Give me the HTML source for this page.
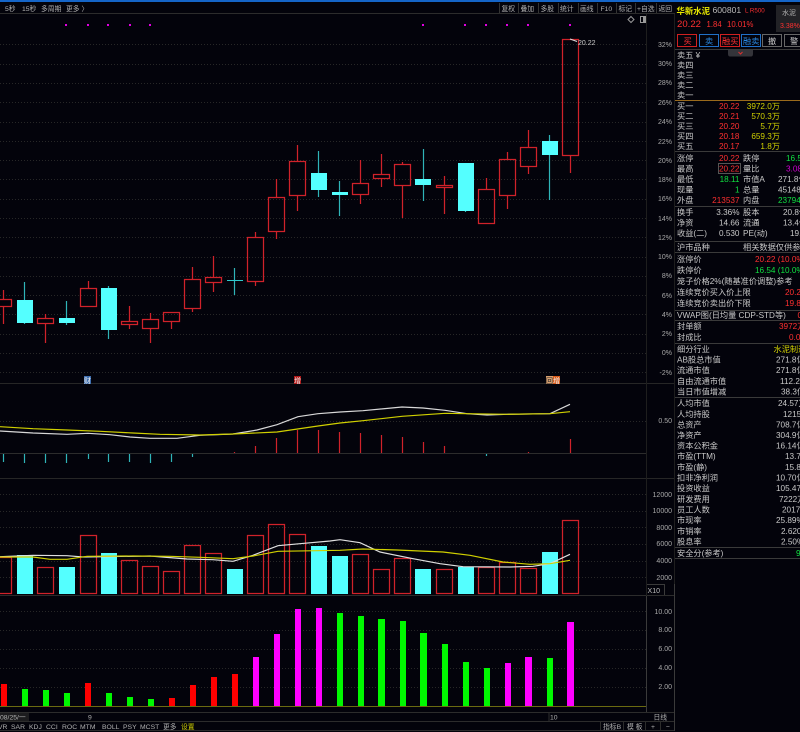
<!DOCTYPE html>
<html><head><meta charset="utf-8"><style>
html,body{margin:0;padding:0;background:#03030b;overflow:hidden}
svg{display:block;position:absolute;left:0;top:0}
text{font-family:"Liberation Sans","Noto Sans CJK SC",sans-serif;font-size:8.2px;fill:#c8c8c8}
.t text{font-size:6.8px;fill:#b0b0b0}
.a text{font-size:7px;fill:#a8a8a8;text-anchor:end}
.r{fill:#ff3030!important}
.y{fill:#d0d000!important}
.g{fill:#10e040!important}
.m{fill:#d000d0!important}
.e{text-anchor:end}
</style></head><body>
<svg width="800" height="732" viewBox="0 0 800 732" xmlns="http://www.w3.org/2000/svg">
<rect width="800" height="732" fill="#03030b"/>
<rect width="800" height="2" fill="#1565c8"/>
<path d="M0 13.5H675" stroke="#2c2c2c"/>
<!-- grids -->
<path stroke="#272727" stroke-dasharray="1 2" d="M0 44.500H646M0 64.500H646M0 83.500H646M0 102.500H646M0 122.500H646M0 141.500H646M0 160.500H646M0 179.500H646M0 199.500H646M0 218.500H646M0 237.500H646M0 257.500H646M0 276.500H646M0 295.500H646M0 314.500H646M0 334.500H646M0 353.500H646M0 372.500H646M0 421.500H646M0 494.500H646M0 511.500H646M0 527.500H646M0 544.500H646M0 561.500H646M0 577.500H646M0 611.500H646M0 630.500H646M0 649.500H646M0 668.500H646M0 687.500H646"/>
<!-- panel dividers -->
<path stroke="#262626" d="M0 383.500H675M0 478.500H675"/>
<path stroke="#2c2c2c" d="M0 595.500H675M0 712.500H675M0 721.500H675M0 730.500H675"/>
<path stroke="#1e1e1e" d="M646.500 14V596"/>
<path stroke="#3a3a3a" d="M646.500 596V712M674.500 584V731"/>
<path stroke="#1e1e1e" d="M674.500 14V584"/>
<path stroke="#6a6a10" d="M0 706.500H646"/>
<path stroke="#2c2c2c" d="M0 453.500H646"/>
<!-- top dots -->
<g fill="#e000e0"><rect x="65" y="24" width="2" height="2"/><rect x="87" y="24" width="2" height="2"/><rect x="107" y="24" width="2" height="2"/><rect x="129" y="24" width="2" height="2"/><rect x="149" y="24" width="2" height="2"/><rect x="422" y="24" width="2" height="2"/><rect x="464" y="24" width="2" height="2"/><rect x="485" y="24" width="2" height="2"/><rect x="506" y="24" width="2" height="2"/><rect x="527" y="24" width="2" height="2"/><rect x="569" y="24" width="2" height="2"/></g>
<!-- red candles -->
<path fill="none" stroke="#d0222a" stroke-width="1.25" d="M-4.500 299.500h16v7h-16zM3.500 290V299M3.500 307V324
M37.500 318.500h16v5h-16zM45.500 314V318M45.500 324V343
M80.500 288.500h16v18h-16zM88.500 281V288
M121.500 321.500h16v3h-16zM129.500 306V321M129.500 325V329
M142.500 319.500h16v9h-16zM150.500 313V319M150.500 329V343
M163.500 312.500h16v9h-16zM171.500 322V329
M184.500 279.500h16v29h-16zM192.500 267V279M192.500 309V312
M205.500 277.500h16v5h-16zM213.500 256V277M213.500 283V292
M247.500 237.500h16v44h-16zM255.500 232V237M255.500 282V286
M268.500 197.500h16v34h-16zM276.500 179V197M276.500 232V239
M289.500 161.500h16v34h-16zM297.500 145V161M297.500 196V211
M352.500 183.500h16v11h-16zM360.500 160V183M360.500 195V204
M373.500 174.500h16v4h-16zM381.500 154V174M381.500 179V187
M394.500 164.500h16v21h-16zM402.500 162V164M402.500 186V218
M436.500 185.500h16v2h-16zM444.500 176V185M444.500 188V214
M478.500 189.500h16v34h-16zM486.500 178V189
M499.500 159.500h16v36h-16zM507.500 152V159M507.500 196V209
M520.500 147.500h16v19h-16zM528.500 130V147M528.500 167V174
M562.500 39.500h16v116h-16zM570.500 156V173"/>
<!-- cyan candles -->
<path fill="none" stroke="#2fb4b8" stroke-width="1.2" d="M24.500 282V324M66.500 301V325M108.500 286V339M318.500 151V197M339.500 181V216M423.500 149V201M465.500 211V212M549.500 135V200M234.500 268V295"/>
<path stroke="#2fc8cc" d="M227 280.500H243"/>
<g fill="#54ffff"><rect x="17" y="300" width="16" height="23"/><rect x="59" y="318" width="16" height="5"/><rect x="101" y="288" width="16" height="42"/><rect x="311" y="173" width="16" height="17"/><rect x="332" y="192" width="16" height="3"/><rect x="415" y="179" width="16" height="6"/><rect x="458" y="163" width="16" height="48"/><rect x="542" y="141" width="16" height="14"/></g>
<path stroke="#ddd" fill="none" d="M570 39L577 41.500"/>
<text x="578" y="45" style="font-size:7px">20.22</text>
<!-- icons -->
<path fill="none" stroke="#999" d="M631 16.500l3 3-3 3-3-3z"/>
<path fill="none" stroke="#999" d="M640.500 16.500h5v6h-5z"/><rect x="643" y="17" width="2" height="5" fill="#999"/>
<!-- event markers -->
<rect x="84" y="376" width="7" height="8" fill="#3f6fb0"/><text x="84" y="383" style="font-size:7px;fill:#eee">财</text>
<rect x="294" y="376" width="7" height="8" fill="#b01818"/><text x="294" y="383" style="font-size:7px;fill:#eee">增</text>
<rect x="546" y="376" width="7" height="8" fill="#d8a070"/><text x="546" y="383" style="font-size:7px;fill:#222">回</text>
<rect x="553" y="376" width="7" height="8" fill="#d85a18"/><text x="553" y="383" style="font-size:7px;fill:#eee">增</text>
<!-- MACD -->
<path stroke="#2fb4b8" stroke-width="1.2" d="M3.500 454V462M24.500 454V463M45.500 454V463M66.500 454V463M88.500 454V459M108.500 454V462M129.500 454V462M150.500 454V463M171.500 454V462M192.500 454V457M486.500 454V456"/>
<path stroke="#d0222a" stroke-width="1.2" d="M234.500 452V453M255.500 446V453M276.500 438V453M297.500 430V453M318.500 430V453M339.500 432V453M360.500 433V453M381.500 435V453M402.500 437V453M423.500 442V453M444.500 446V453M528.500 452V453M570.500 439V453"/>
<polyline fill="none" stroke="#d8d8d8" stroke-width="1.2" points="0,431 33,433 67,434.3 88,433.3 110,434.7 130,437 150,438.3 177,438.3 200,435.3 233,434 257,430 277,424.7 298,416.7 318,413.7 340,412 363,410.7 402,407 423,408 445,410.3 467,413.7 487,415 507,414.3 550,413.7 570,404.3"/>
<polyline fill="none" stroke="#d0d000" stroke-width="1.2" points="0,426.7 33,428.7 67,430 100,431.3 133,433 160,434.3 200,435 233,434 277,432 318,426 340,423 363,420.7 402,416.3 445,413.3 467,413.7 507,414.3 550,413.7 570,411.7"/>
<!-- volume -->
<path fill="none" stroke="#d0222a" stroke-width="1.25" d="M-4.500 593.500V557.500h16V593.500zM37.500 593.500V567.500h16V593.500zM80.500 593.500V535.500h16V593.500zM121.500 593.500V560.500h16V593.500zM142.500 593.500V566.500h16V593.500zM163.500 593.500V571.500h16V593.500zM184.500 593.500V545.500h16V593.500zM205.500 593.500V553.500h16V593.500zM247.500 593.500V535.500h16V593.500zM268.500 593.500V524.500h16V593.500zM289.500 593.500V534.500h16V593.500zM352.500 593.500V554.500h16V593.500zM373.500 593.500V569.500h16V593.500zM394.500 593.500V558.500h16V593.500zM436.500 593.500V569.500h16V593.500zM478.500 593.500V567.500h16V593.500zM499.500 593.500V562.500h16V593.500zM520.500 593.500V568.500h16V593.500zM562.500 593.500V520.500h16V593.500z"/>
<g fill="#54ffff"><rect x="17" y="555" width="16" height="39"/><rect x="59" y="567" width="16" height="27"/><rect x="101" y="553" width="16" height="41"/><rect x="227" y="569" width="16" height="25"/><rect x="311" y="546" width="16" height="48"/><rect x="332" y="556" width="16" height="38"/><rect x="415" y="569" width="16" height="25"/><rect x="458" y="567" width="16" height="27"/><rect x="542" y="552" width="16" height="42"/></g>
<polyline fill="none" stroke="#e0e0e0" stroke-width="1.2" points="0,556.7 33,555.3 67,555.7 83,557 150,556 187,559 213,559.7 233,561.3 253,555.3 278,545.7 300,543.7 330,541 340,539.7 360,542.7 380,552 413,558.7 440,563.7 463,566.7 510,567 533,566.3 550,563.7 570,554.3"/>
<polyline fill="none" stroke="#d0d000" stroke-width="1.2" points="0,557 33,557 50,559.3 67,559.3 87,556.3 133,556 170,556.3 200,557.3 233,558.7 253,556 278,551.3 340,550.3 363,549 397,550 443,552 470,555.3 503,562 530,564.3 550,563.7 570,560.3"/>
<!-- indicator bars -->
<g fill="#ff0000"><rect x="1" y="684" width="6" height="22"/><rect x="85" y="683" width="6" height="23"/><rect x="169" y="698" width="6" height="8"/><rect x="190" y="685" width="6" height="21"/><rect x="211" y="677" width="6" height="29"/><rect x="232" y="674" width="6" height="32"/></g>
<g fill="#00f800"><rect x="22" y="689" width="6" height="17"/><rect x="43" y="690" width="6" height="16"/><rect x="64" y="693" width="6" height="13"/><rect x="106" y="693" width="6" height="13"/><rect x="127" y="697" width="6" height="9"/><rect x="148" y="699" width="6" height="7"/><rect x="337" y="613" width="6" height="93"/><rect x="358" y="616" width="6" height="90"/><rect x="378" y="619" width="7" height="87"/><rect x="400" y="621" width="6" height="85"/><rect x="420" y="633" width="7" height="73"/><rect x="442" y="644" width="6" height="62"/><rect x="463" y="662" width="6" height="44"/><rect x="484" y="668" width="6" height="38"/><rect x="547" y="658" width="6" height="48"/></g>
<g fill="#ff00ff"><rect x="253" y="657" width="6" height="49"/><rect x="274" y="634" width="6" height="72"/><rect x="295" y="609" width="6" height="97"/><rect x="316" y="608" width="6" height="98"/><rect x="505" y="663" width="6" height="43"/><rect x="525" y="657" width="7" height="49"/><rect x="567" y="622" width="7" height="84"/></g>
<!-- axis labels -->
<g class="a">
<text x="672" y="47">32%</text><text x="672" y="66">30%</text><text x="672" y="85">28%</text><text x="672" y="105">26%</text><text x="672" y="124">24%</text><text x="672" y="144">22%</text><text x="672" y="163">20%</text><text x="672" y="182">18%</text><text x="672" y="201">16%</text><text x="672" y="221">14%</text><text x="672" y="240">12%</text><text x="672" y="259">10%</text><text x="672" y="278">8%</text><text x="672" y="298">6%</text><text x="672" y="317">4%</text><text x="672" y="336">2%</text><text x="672" y="355">0%</text><text x="672" y="375">-2%</text>
<text x="672" y="423">0.50</text>
<text x="672" y="497">12000</text><text x="672" y="513">10000</text><text x="672" y="530">8000</text><text x="672" y="546">6000</text><text x="672" y="563">4000</text><text x="672" y="580">2000</text>
<text x="672" y="614">10.00</text><text x="672" y="632">8.00</text><text x="672" y="651">6.00</text><text x="672" y="670">4.00</text><text x="672" y="689">2.00</text>
<text x="660" y="593" style="fill:#bbb">X10</text>
</g>
<path stroke="#3a3a3a" fill="none" d="M647 584.500H664.500V595"/>
<!-- toolbar -->
<g class="t">
<text x="5" y="11">5秒</text><text x="22" y="11">15秒</text><text x="41" y="11">多周期</text><text x="66" y="11">更多 〉</text>
<text x="501.500" y="11">复权</text><text x="520.500" y="11">叠加</text><text x="540.500" y="11">多股</text><text x="560" y="11">统计</text><text x="580" y="11">画线</text><text x="600.500" y="11">F10</text><text x="618.500" y="11">标记</text><text x="637" y="11">+自选</text><text x="658.500" y="11">返回</text>
</g>
<path stroke="#333" d="M499.500 3V13M518.500 3V13M538.500 3V13M558.500 3V13M578.500 3V13M597.500 3V13M616.500 3V13M635.500 3V13M656.500 3V13"/>
<!-- date & tabs -->
<rect x="0" y="713" width="29" height="8" fill="#1c1c1e"/>
<g class="t">
<text x="0" y="719.500">08/25/一</text><text x="88" y="719.500">9</text><text x="550" y="719.500">10</text><text x="653.500" y="719.500">日线</text>
<text x="-2" y="729">VR</text><text x="11" y="729">SAR</text><text x="29" y="729">KDJ</text><text x="46" y="729">CCI</text><text x="62" y="729">ROC</text><text x="80" y="729">MTM</text><text x="102" y="729">BOLL</text><text x="123" y="729">PSY</text><text x="140" y="729">MCST</text><text x="163" y="729">更多</text><text x="181" y="729" class="y">设置</text>
<text x="603" y="729">指标B</text><text x="627" y="729">模 板</text><text x="651" y="729">+</text><text x="666" y="729">−</text>
</g>
<path stroke="#2c2c2c" d="M549 713V721M600.500 722V730M623.500 722V730M645.500 722V730M660.500 722V730"/>
<!-- sidebar header -->
<text x="676.500" y="14" style="font-size:8.4px;font-weight:bold;fill:#e8e800">华新水泥</text>
<text x="712.500" y="13" style="font-size:8.6px;fill:#b8b8b8">600801</text>
<text x="745" y="12.500" style="font-size:6.2px" class="r">L R500</text>
<rect x="776" y="5" width="24" height="27" fill="#222226"/>
<text x="782" y="15" style="font-size:7px;fill:#b0b0b0">水泥</text>
<text x="780" y="28" style="font-size:7px" class="r">3.38%</text>
<text x="677" y="27" style="font-size:9.6px" class="r">20.22</text>
<text x="706.500" y="27" class="r" style="font-size:7.8px">1.84</text>
<text x="727" y="27" class="r" style="font-size:7.8px">10.01%</text>
<!-- buttons -->
<g fill="none">
<rect x="677.500" y="34.500" width="19" height="12" stroke="#d02020"/>
<rect x="699.500" y="34.500" width="19" height="12" stroke="#2070c8"/>
<rect x="720.500" y="34.500" width="19" height="12" stroke="#d02020"/>
<rect x="741.500" y="34.500" width="19" height="12" stroke="#2070c8"/>
<rect x="762.500" y="34.500" width="19" height="12" stroke="#666"/>
<rect x="784.500" y="34.500" width="19" height="12" stroke="#666"/>
</g>
<text x="683.500" y="44" class="r">买</text><text x="705" y="44" style="fill:#2a88e0">卖</text><text x="722" y="44" class="r">融买</text><text x="743" y="44" style="fill:#2a88e0">融卖</text><text x="768" y="44">撤</text><text x="790" y="44">警</text>
<path stroke="#3a3a3a" d="M675 49.500H800M675 151.500H800M675 206.500H800M675 241.500H800M675 252.500H800M675 310.500H800M675 320.500H800M675 343.500H800M675 397.500H800M675 547.500H800M675 558.500H800"/>
<path d="M728 50H753V54q0 2.500-2 2.500H730q-2 0-2-2.500z" fill="#34343a"/>
<path d="M738.500 52l2 2 2-2" stroke="#e03030" fill="none"/>
<path stroke="#9a6a1c" d="M675 100.500H800"/>
<!-- sell -->
<text x="677" y="58">卖五 ¥</text><text x="677" y="68">卖四</text><text x="677" y="78">卖三</text><text x="677" y="88">卖二</text><text x="677" y="98">卖一</text>
<text x="677" y="109">买一</text><text x="677" y="119">买二</text><text x="677" y="129">买三</text><text x="677" y="139">买四</text><text x="677" y="149">买五</text>
<g class="e">
<text x="739.500" y="109" class="r e">20.22</text><text x="739.500" y="119" class="r e">20.21</text><text x="739.500" y="129" class="r e">20.20</text><text x="739.500" y="139" class="r e">20.18</text><text x="739.500" y="149" class="r e">20.17</text>
<text x="780" y="109" class="y e">3972.0万</text><text x="780" y="119" class="y e">570.3万</text><text x="780" y="129" class="y e">5.7万</text><text x="780" y="139" class="y e">659.3万</text><text x="780" y="149" class="y e">1.8万</text>
</g>
<!-- quote -->
<text x="677" y="161">涨停</text><text x="739.500" y="161" class="r e">20.22</text><text x="743" y="161">跌停</text><text x="786" y="161" class="g">16.54</text>
<rect x="718.500" y="163.500" width="22" height="10" fill="none" stroke="#555"/>
<text x="677" y="171.500">最高</text><text x="739.500" y="171.500" class="r e">20.22</text><text x="743" y="171.500">量比</text><text x="786" y="171.500" class="m">3.08</text>
<text x="677" y="182">最低</text><text x="739.500" y="182" class="g e">18.11</text><text x="743" y="182">市值A</text><text x="778" y="182">271.8亿</text>
<text x="677" y="192.500">现量</text><text x="739.500" y="192.500" class="g e">1</text><text x="743" y="192.500">总量</text><text x="778" y="192.500">451480</text>
<text x="677" y="203">外盘</text><text x="739.500" y="203" class="r e">213537</text><text x="743" y="203">内盘</text><text x="778" y="203" class="g">237943</text>
<text x="677" y="215">换手</text><text x="739.500" y="215" class="e">3.36%</text><text x="743" y="215">股本</text><text x="783" y="215">20.8亿</text>
<text x="677" y="225.500">净资</text><text x="739.500" y="225.500" class="e">14.66</text><text x="743" y="225.500">流通</text><text x="783" y="225.500">13.4亿</text>
<text x="677" y="236">收益(二)</text><text x="739.500" y="236" class="e">0.530</text><text x="743" y="236">PE(动)</text><text x="790" y="236">19.1</text>
<text x="677" y="250">沪市品种</text><text x="743" y="250">相关数据仅供参考</text>
<text x="677" y="262">涨停价</text><text x="755" y="262" class="r">20.22 (10.0%)</text>
<text x="677" y="273">跌停价</text><text x="755" y="273" class="g">16.54 (10.0%)</text>
<text x="677" y="284">笼子价格2%(随基准价调整)参考</text>
<text x="677" y="295">连续竞价买入价上限</text><text x="785" y="295" class="r">20.2</text>
<text x="677" y="306">连续竞价卖出价下限</text><text x="785" y="306" class="r">19.8</text>
<text x="677" y="318">VWAP图(日均量 CDP-STD等)</text><text x="797.500" y="318" class="r">0</text>
<text x="677" y="329">封单额</text><text x="779" y="329" class="r">3972万</text>
<text x="677" y="340">封成比</text><text x="789" y="340" class="r">0.0</text>
<text x="677" y="352">细分行业</text><text x="773.500" y="352" class="y">水泥制造</text>
<text x="677" y="362.500">AB股总市值</text><text x="776" y="362.500">271.8亿</text>
<text x="677" y="373">流通市值</text><text x="776" y="373">271.8亿</text>
<text x="677" y="384">自由流通市值</text><text x="780" y="384">112.2亿</text>
<text x="677" y="394.500">当日市值增减</text><text x="781" y="394.500">38.3亿</text>
<text x="677" y="406">人均市值</text><text x="778" y="406">24.57万</text>
<text x="677" y="417">人均持股</text><text x="783" y="417">1215股</text>
<text x="677" y="427.500">总资产</text><text x="776" y="427.500">708.7亿</text>
<text x="677" y="438">净资产</text><text x="776" y="438">304.9亿</text>
<text x="677" y="448.500">资本公积金</text><text x="776" y="448.500">16.14亿</text>
<text x="677" y="459">市盈(TTM)</text><text x="785" y="459">13.7</text>
<text x="677" y="470">市盈(静)</text><text x="785" y="470">15.8</text>
<text x="677" y="480.500">扣非净利润</text><text x="776" y="480.500">10.70亿</text>
<text x="677" y="491">投资收益</text><text x="776" y="491">105.47</text>
<text x="677" y="502">研发费用</text><text x="779" y="502">7222万</text>
<text x="677" y="512.500">员工人数</text><text x="782" y="512.500">2017人</text>
<text x="677" y="523">市现率</text><text x="776" y="523">25.89%</text>
<text x="677" y="534">市销率</text><text x="781" y="534">2.620</text>
<text x="677" y="544.500">股息率</text><text x="781" y="544.500">2.50%</text>
<text x="677" y="556">安全分(参考)</text><text x="796" y="556" class="g">9</text>
</svg>
</body></html>
